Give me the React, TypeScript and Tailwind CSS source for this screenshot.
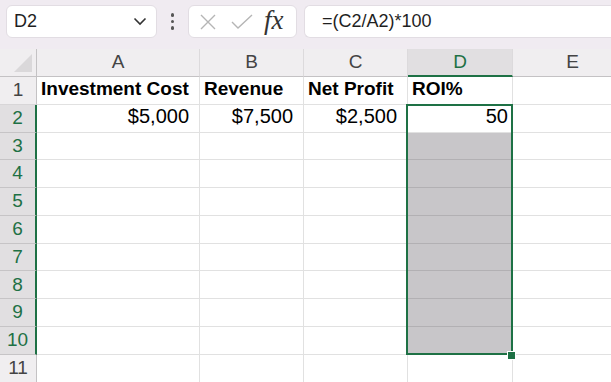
import React from "react";

const cols = ["A", "B", "C", "D", "E"];
const colW = [163, 104, 104, 105, 120];
const rowH = [28, 27.5, 27.8, 27.8, 27.8, 27.8, 27.8, 27.8, 27.8, 27.8, 27.8];

type Cell = { t: string; bold?: boolean; right?: boolean; pr?: number };

const data: Record<string, Cell> = {
  "1A": { t: "Investment Cost", bold: true },
  "1B": { t: "Revenue", bold: true },
  "1C": { t: "Net Profit", bold: true },
  "1D": { t: "ROI%", bold: true },
  "2A": { t: "$5,000", right: true, pr: 10 },
  "2B": { t: "$7,500", right: true, pr: 10 },
  "2C": { t: "$2,500", right: true, pr: 10 },
  "2D": { t: "50", right: true, pr: 4 },
};

export default function App() {
  const font = { fontFamily: '"Liberation Sans", Arial, sans-serif' };
  return (
    <div className="w-[611px] h-[382px] overflow-hidden bg-white relative" style={font}>
      {/* Top bar */}
      <div className="h-[49px] bg-[#f0ebf1] flex items-start pt-[5px] pl-[6px] gap-0">
        <div className="w-[151px] h-[33px] bg-white rounded-[6px] border border-[#e2dde3] flex items-center justify-between pl-[7px] pr-[9px]">
          <span className="text-[18px] text-[#1f1f1f]">D2</span>
          <svg width="14" height="9" viewBox="0 0 14 9">
            <path d="M1.5 1.5 L7 7 L12.5 1.5" fill="none" stroke="#333" strokeWidth="1.6" />
          </svg>
        </div>
        <div className="w-[31px] h-[33px] flex flex-col items-center justify-center gap-[3px]">
          <div className="w-[3.5px] h-[3.5px] rounded-full bg-[#555]" />
          <div className="w-[3.5px] h-[3.5px] rounded-full bg-[#555]" />
          <div className="w-[3.5px] h-[3.5px] rounded-full bg-[#555]" />
        </div>
        <div className="w-[109px] h-[33px] bg-white rounded-[6px] border border-[#e2dde3] flex items-center pl-[10px]">
          <svg width="18" height="18" viewBox="0 0 18 18">
            <path d="M2 2 L16 16 M16 2 L2 16" stroke="#b5b5b5" strokeWidth="1.4" />
          </svg>
          <svg width="24" height="18" viewBox="0 0 24 18" className="ml-[13px]">
            <path d="M2 9 L8 15 L22 2" fill="none" stroke="#b5b5b5" strokeWidth="1.4" />
          </svg>
          <span
            className="ml-[10px] text-[27px] italic text-[#333] leading-none mb-[3px]"
            style={{ fontFamily: '"Liberation Serif", "Times New Roman", serif' }}
          >
            fx
          </span>
        </div>
        <div className="ml-[7px] flex-1 h-[33px] bg-white rounded-l-[6px] border border-r-0 border-[#e2dde3] flex items-center pl-[17px]">
          <span className="text-[18px] text-[#1f1f1f]">=(C2/A2)*100</span>
        </div>
      </div>

      {/* Grid */}
      <div className="relative">
        {/* header row */}
        <div className="flex h-[28px]">
          <div className="w-[37px] shrink-0 bg-[#f0eef0] border-r border-b border-[#c4c2c4] relative">
            <div
              className="absolute right-[4px] bottom-[4px] w-0 h-0"
              style={{
                borderLeft: "18px solid transparent",
                borderBottom: "18px solid #dad8da",
              }}
            />
          </div>
          {cols.map((c, i) => (
            <div
              key={c}
              style={{ width: colW[i] }}
              className={
                "shrink-0 flex items-center justify-center text-[19px] border-r border-[#dcdadc] " +
                (c === "D"
                  ? "bg-[#e1dfe1] text-[#1e7145] border-b-2 border-b-[#1e7145]"
                  : "bg-[#f0eef0] text-[#444] border-b border-b-[#c4c2c4]")
              }
            >
              {c}
            </div>
          ))}
        </div>
        {rowH.map((h, ri) => {
          const r = ri + 1;
          const sel = r >= 2 && r <= 10;
          return (
            <div key={r} className="flex" style={{ height: h }}>
              <div
                className={
                  "w-[37px] shrink-0 flex items-center justify-center text-[19px] border-b " +
                  (sel
                    ? "bg-[#e1dfe1] text-[#1e7145] border-b-[#c6c4c6] border-r-2 border-r-[#1e7145]"
                    : "bg-[#f0eef0] text-[#444] border-b-[#d8d6d8] border-r border-r-[#c4c2c4]")
                }
              >
                {r}
              </div>
              {cols.map((c, i) => {
                const cell = data[`${r}${c}`];
                const gray = c === "D" && r >= 3 && r <= 10;
                return (
                  <div
                    key={c}
                    style={{ width: colW[i], paddingRight: cell?.pr }}
                    className={
                      "shrink-0 flex items-end pb-[1px] border-r border-b text-black whitespace-nowrap overflow-visible " +
                      (gray ? "bg-[#c8c6c9] border-[#b2b0b3] " : "border-[#e1e1e1] ") +
                      (cell?.right ? "justify-end text-[20px]" : "justify-start pl-[4px] text-[19px]") +
                      (cell?.bold ? " font-bold" : "")
                    }
                  >
                    {cell?.t}
                  </div>
                );
              })}
            </div>
          );
        })}
        {/* Selection outline */}
        <div
          className="absolute border-2 border-[#1e7145] pointer-events-none"
          style={{ left: 406, top: 55, width: 107, height: 251 }}
        />
        <div
          className="absolute w-[7px] h-[7px] bg-[#1e7145] border border-white box-content pointer-events-none"
          style={{ left: 507, top: 302 }}
        />
      </div>
    </div>
  );
}
